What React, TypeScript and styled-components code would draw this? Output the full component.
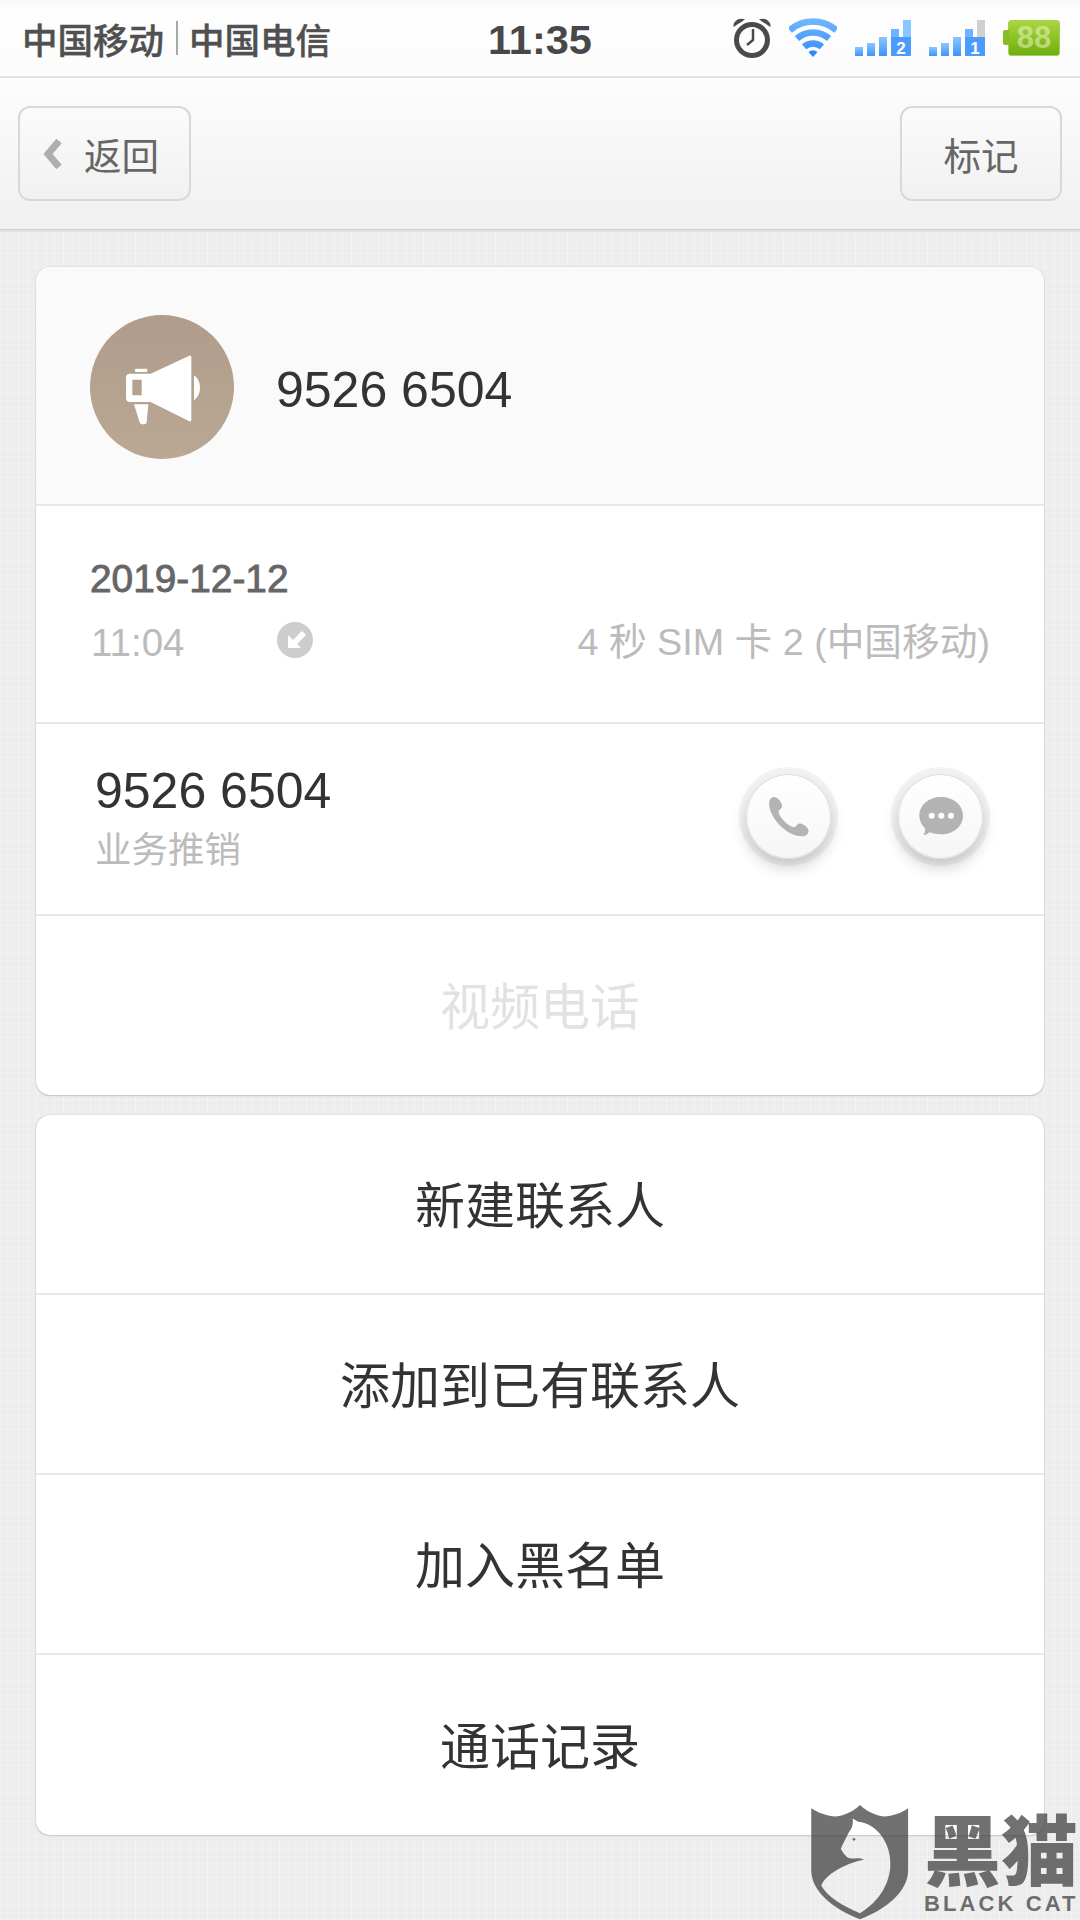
import styled, { createGlobalStyle } from "styled-components";

const SANS = `"Liberation Sans", "Noto Sans CJK SC", sans-serif`;

const Global = createGlobalStyle`
	html, body {
		margin: 0;
		padding: 0;
	}
	body {
		font-family: ${SANS};
		background: #f0f0f0;
	}
`;

const menuItems = ["新建联系人", "添加到已有联系人", "加入黑名单", "通话记录"];

const Signal = ({ sim, full }: { sim: string; full?: boolean }) => (
	<svg width="56" height="36" viewBox="0 0 56 36">
		<defs>
			<linearGradient id={`bar${sim}`} x1="0" y1="0" x2="0" y2="1">
				<stop offset="0" stopColor="#8cc6ff" />
				<stop offset="1" stopColor="#3f93fb" />
			</linearGradient>
		</defs>
		<rect x="0" y="27" width="8" height="9" fill={`url(#bar${sim})`} />
		<rect x="12" y="23" width="8" height="13" fill={`url(#bar${sim})`} />
		<rect x="24" y="17" width="8" height="19" fill={`url(#bar${sim})`} />
		<rect x="36" y="9" width="8" height="12" fill="#70b3fd" />
		{full ? (
			<rect x="48" y="0" width="8" height="21" fill="#8cc6ff" />
		) : (
			<rect x="48" y="0" width="8" height="17" fill="#d0d0d0" />
		)}
		<rect x="36" y="17" width="20" height="19" fill="#4a9bfb" />
		<text x="46" y="33.5" textAnchor="middle" fontSize="17" fontWeight="700" fontFamily="Liberation Sans" fill="#fff">
			{sim}
		</text>
	</svg>
);

const Wifi = () => (
	<svg width="48" height="40" viewBox="0 0 48 40">
		<defs>
			<linearGradient id="wifi" gradientUnits="userSpaceOnUse" x1="0" y1="0" x2="0" y2="40">
				<stop offset="0" stopColor="#74b8ff" />
				<stop offset="1" stopColor="#2c88fb" />
			</linearGradient>
		</defs>
		<g fill="none" stroke="url(#wifi)" strokeWidth="6.5">
			<path d="M0.7 12.2A35.5 35.5 0 0 1 47.3 12.2" />
			<path d="M7.9 20.5A24.5 24.5 0 0 1 40.1 20.5" />
			<path d="M15.1 28.8A13.5 13.5 0 0 1 32.9 28.8" />
		</g>
		<path d="M24 39L19.5 34A7 7 0 0 1 28.5 34Z" fill="#2c88fb" />
	</svg>
);

const Alarm = () => (
	<svg width="38" height="40" viewBox="0 0 38 40">
		<circle cx="19" cy="22" r="15.5" fill="none" stroke="#4a4a4a" strokeWidth="5" />
		<path d="M0.5 9C0 3 6 -1 12 1.5Z M37.5 9C38 3 32 -1 26 1.5Z" fill="#4a4a4a" />
		<path d="M20 11V22L14 27" fill="none" stroke="#4a4a4a" strokeWidth="2.5" />
	</svg>
);

const Megaphone = () => (
	<svg width="80" height="80" viewBox="276 260 240 240">
		<g fill="#fff">
			<rect x="315" y="325" width="37" height="10" rx="4" />
			<path
				fillRule="evenodd"
				d="M300 340H362L478 286Q484 284 484 292V478Q484 486 478 483L362 425H300Q288 425 288 413V352Q288 340 300 340ZM307 358V405H335V358Z"
			/>
			<path d="M312 432H355L350 486Q349 492 343 492H336Q331 492 329 486Z" />
			<path d="M492 345Q510 358 510 382Q510 406 492 420Z" />
		</g>
	</svg>
);

const CallIn = () => (
	<svg width="36" height="36" viewBox="0 0 36 36">
		<circle cx="18" cy="18" r="18" fill="#cdcdcd" />
		<path d="M13 21L25 9L29 13L17 25Z" fill="#fff" />
		<path d="M11 13L11 26L24 26L19 20.5L16.5 21L16 18Z" fill="#fff" />
	</svg>
);

const PhoneGlyph = () => (
	<svg width="85" height="85" viewBox="140 103 255 255">
		<path
			d="M222 172C212 174 208 186 210 200C214 235 260 290 308 290C322 290 330 280 327 270C322 258 305 250 298 252C292 254 290 264 280 262C262 256 240 232 238 218C236 208 250 210 248 196C245 184 232 170 222 172Z"
			fill="#b3b3b3"
		/>
	</svg>
);

const BubbleGlyph = () => (
	<svg width="85" height="85" viewBox="596 103 255 255">
		<path d="M725 172C762 172 791 196 791 228C791 260 762 284 725 284C712 284 700 282 690 278C684 283 678 287 672 287C677 279 678 272 677 266C667 256 660 243 660 228C660 196 689 172 725 172Z" fill="#b3b3b3" />
		<circle cx="697" cy="228" r="9" fill="#fff" />
		<circle cx="726" cy="228" r="9" fill="#fff" />
		<circle cx="755" cy="228" r="9" fill="#fff" />
	</svg>
);

const Shield = () => (
	<svg width="98" height="116" viewBox="95 75 290 345">
		<path
			fillRule="evenodd"
			fill="rgba(58,58,58,0.72)"
			d="M95 85C125 105 165 115 190 105C210 97 228 88 240 75C252 88 270 97 290 105C315 115 355 105 383 85V270C383 330 320 385 240 415C160 385 95 330 95 270ZM218 115L235 125C290 130 335 190 330 260C325 320 290 365 240 397C190 375 145 350 125 315C135 285 190 250 252 238C235 228 215 238 205 232C195 226 185 210 183 205C190 190 200 170 205 160C210 150 222 140 218 115Z"
		/>
		<circle cx="222" cy="177" r="4" fill="rgba(58,58,58,0.72)" />
	</svg>
);

export default function App() {
	return (
		<Page>
			<Global />
			<StatusBar>
				<Carriers>
					<span>中国移动</span>
					<CarrierRule />
					<span>中国电信</span>
				</Carriers>
				<Clock>11:35</Clock>
				<StatusIcons>
					<Alarm />
					<Wifi />
					<Signal sim="2" full />
					<Signal sim="1" />
					<Battery>
						<BatteryBody>88</BatteryBody>
					</Battery>
				</StatusIcons>
			</StatusBar>
			<NavBar>
				<BackButton $width={173}>
					<svg width="19" height="30" viewBox="0 0 19 30">
						<path d="M16 2L5 15L16 28" fill="none" stroke="#aeaeae" strokeWidth="7" />
					</svg>
					<span>返回</span>
				</BackButton>
				<NavButton $width={162}>
					<span>标记</span>
				</NavButton>
			</NavBar>
			<Content>
				<Card>
					<CardHeader>
						<Avatar>
							<Megaphone />
						</Avatar>
						<HeaderNumber>9526 6504</HeaderNumber>
					</CardHeader>
					<CallInfo>
						<CallDate>2019-12-12</CallDate>
						<CallMeta>
							<CallTime>11:04</CallTime>
							<CallIcon>
								<CallIn />
							</CallIcon>
							<CallDetail>4 秒 SIM 卡 2 (中国移动)</CallDetail>
						</CallMeta>
					</CallInfo>
					<ContactRow>
						<ContactText>
							<ContactNumber>9526 6504</ContactNumber>
							<ContactTag>业务推销</ContactTag>
						</ContactText>
						<RoundActions>
							<RoundButton>
								<PhoneGlyph />
							</RoundButton>
							<RoundButton>
								<BubbleGlyph />
							</RoundButton>
						</RoundActions>
					</ContactRow>
					<VideoRow>视频电话</VideoRow>
				</Card>
				<Card>
					{menuItems.map((el) => (
						<MenuRow key={el}>{el}</MenuRow>
					))}
				</Card>
			</Content>
			<Watermark>
				<Shield />
				<WatermarkText>
					<WatermarkName>黑猫</WatermarkName>
					<WatermarkLatin>BLACK CAT</WatermarkLatin>
				</WatermarkText>
			</Watermark>
		</Page>
	);
}

const Page = styled.div`
	position: relative;
	width: 1080px;
	height: 1920px;
	overflow: hidden;
	background-color: #f0f0f0;
	background-image: repeating-linear-gradient(0deg, rgba(0, 0, 0, 0.012) 0 1px, transparent 1px 2px),
		repeating-linear-gradient(90deg, rgba(0, 0, 0, 0.012) 0 1px, transparent 1px 2px),
		repeating-linear-gradient(0deg, rgba(255, 255, 255, 0.25) 0 1px, transparent 1px 7px),
		repeating-linear-gradient(90deg, rgba(255, 255, 255, 0.25) 0 1px, transparent 1px 9px);
`;

const StatusBar = styled.div`
	display: grid;
	grid-template-columns: 1fr auto 1fr;
	align-items: center;
	height: 76px;
	padding: 0 20px 0 22px;
	background: linear-gradient(#f8f8f8, #fefefe 8px, #fcfcfc);
	border-bottom: 2px solid #e6e6e6;
	width: 1038px;
`;
const Carriers = styled.div`
	display: flex;
	align-items: center;
	font-size: 35.5px;
	font-weight: 500;
	color: #505050;
	-webkit-text-stroke: 0.4px #505050;
`;
const CarrierRule = styled.div`
	width: 2px;
	height: 34px;
	margin: 0 11px 0 12px;
	background: #a8a8a8;
`;
const Clock = styled.div`
	padding-top: 3px;
	padding-right: 2px;
	font-size: 41.5px;
	font-weight: 700;
	color: #484848;
`;
const StatusIcons = styled.div`
	display: flex;
	align-items: center;
	justify-content: flex-end;
	gap: 18px;
`;
const Battery = styled.div`
	position: relative;
	width: 57px;
	height: 36px;
	padding-left: 5px;
	box-sizing: border-box;
	&::before {
		content: "";
		position: absolute;
		left: 0;
		top: 10px;
		width: 6px;
		height: 15px;
		border-radius: 2px 0 0 2px;
		background: #85bd22;
	}
`;
const BatteryBody = styled.div`
	height: 36px;
	border-radius: 3px;
	box-sizing: border-box;
	border: 1px solid #a4cf58;
	background: linear-gradient(#a9d63e, #6fae10);
	color: rgba(235, 245, 200, 0.55);
	font-size: 31px;
	font-weight: 700;
	line-height: 34px;
	text-align: center;
`;

const NavBar = styled.div`
	display: flex;
	align-items: center;
	justify-content: space-between;
	height: 152px;
	padding: 0 18px;
	box-sizing: border-box;
	background: linear-gradient(#fdfdfd, #f0f0f0);
	border-bottom: 1px solid #d0d0d0;
	box-shadow: 0 1px 3px rgba(0, 0, 0, 0.1);
`;
const NavButton = styled.div<{ $width: number }>`
	display: flex;
	align-items: center;
	justify-content: center;
	gap: 22px;
	width: ${({ $width }) => $width}px;
	height: 95px;
	box-sizing: border-box;
	border: 2px solid #d8d8d8;
	border-radius: 12px;
	font-size: 37.5px;
	color: #666;
	background: linear-gradient(#fbfbfb, #f1f1f1);
`;
const BackButton = styled(NavButton)`
	padding-right: 7px;
`;

const Content = styled.div`
	display: flex;
	flex-direction: column;
	gap: 20px;
	padding: 37px 36px 0;
`;
const Card = styled.div`
	background: #fff;
	border-radius: 14px;
	overflow: hidden;
	box-shadow: 0 0 1px rgba(0, 0, 0, 0.35), 0 1px 2px rgba(0, 0, 0, 0.15);
`;
const CardHeader = styled.div`
	display: flex;
	align-items: center;
	gap: 42px;
	height: 239px;
	padding: 2px 54px 0;
	box-sizing: border-box;
	background: #fafafa;
	border-bottom: 2px solid #e8e8e8;
`;
const Avatar = styled.div`
	display: flex;
	align-items: center;
	justify-content: center;
	width: 144px;
	height: 144px;
	border-radius: 50%;
	background: linear-gradient(#b09c8a, #baa794);
`;
const HeaderNumber = styled.div`
	padding-top: 6px;
	font-size: 50px;
	color: #333;
`;
const CallInfo = styled.div`
	height: 218px;
	padding: 51px 54px 0;
	box-sizing: border-box;
	border-bottom: 2px solid #e8e8e8;
`;
const CallDate = styled.div`
	font-size: 38.8px;
	line-height: 44px;
	color: #666;
	-webkit-text-stroke: 0.9px #666;
`;
const CallMeta = styled.div`
	display: flex;
	align-items: center;
	margin-top: 20px;
	height: 44px;
`;
const CallTime = styled.div`
	width: 187px;
	padding-left: 1px;
	box-sizing: border-box;
	font-size: 38.5px;
	color: #bbb;
`;
const CallIcon = styled.div`
	display: flex;
	margin-bottom: 7px;
`;
const CallDetail = styled.div`
	margin-left: auto;
	margin-bottom: 9px;
	font-size: 37.7px;
	color: #bbb;
`;
const ContactRow = styled.div`
	display: flex;
	align-items: center;
	justify-content: space-between;
	height: 192px;
	padding: 0 61px 0 59px;
	box-sizing: border-box;
	border-bottom: 2px solid #e8e8e8;
`;
const ContactText = styled.div`
	display: flex;
	flex-direction: column;
`;
const ContactNumber = styled.div`
	font-size: 50px;
	line-height: 56px;
	color: #333;
`;
const ContactTag = styled.div`
	margin-top: 8px;
	font-size: 36.5px;
	line-height: 48px;
	color: #bbb;
`;
const RoundActions = styled.div`
	display: flex;
	gap: 67px;
	margin-bottom: 6px;
`;
const RoundButton = styled.div`
	width: 85px;
	height: 85px;
	border-radius: 50%;
	background: linear-gradient(#fff, #f6f6f6);
	box-shadow: inset 0 0 0 1px #dcdcdc, 0 8px 16px rgba(0, 0, 0, 0.2), 0 0 0 7px rgba(0, 0, 0, 0.045);
	svg {
		display: block;
	}
`;
const VideoRow = styled.div`
	display: flex;
	align-items: center;
	justify-content: center;
	height: 179px;
	padding-bottom: 6px;
	box-sizing: border-box;
	font-size: 50px;
	color: #e2e2e2;
`;
const MenuRow = styled.div`
	display: flex;
	align-items: center;
	justify-content: center;
	height: 180px;
	padding-bottom: 4px;
	box-sizing: border-box;
	font-size: 50px;
	color: #333;
	border-bottom: 2px solid #e8e8e8;
	&:last-child {
		border-bottom: 0;
	}
`;

const Watermark = styled.div`
	position: absolute;
	left: 811px;
	top: 1805px;
	display: flex;
	gap: 15px;
`;
const WatermarkText = styled.div`
	display: flex;
	flex-direction: column;
	color: rgba(58, 58, 58, 0.72);
`;
const WatermarkName = styled.div`
	font-family: "Noto Sans CJK SC", sans-serif;
	font-size: 77px;
	font-weight: 900;
	line-height: 84px;
	white-space: nowrap;
`;
const WatermarkLatin = styled.div`
	margin-top: 4px;
	font-size: 22px;
	font-weight: 700;
	letter-spacing: 3.1px;
	line-height: 22px;
	white-space: nowrap;
`;
